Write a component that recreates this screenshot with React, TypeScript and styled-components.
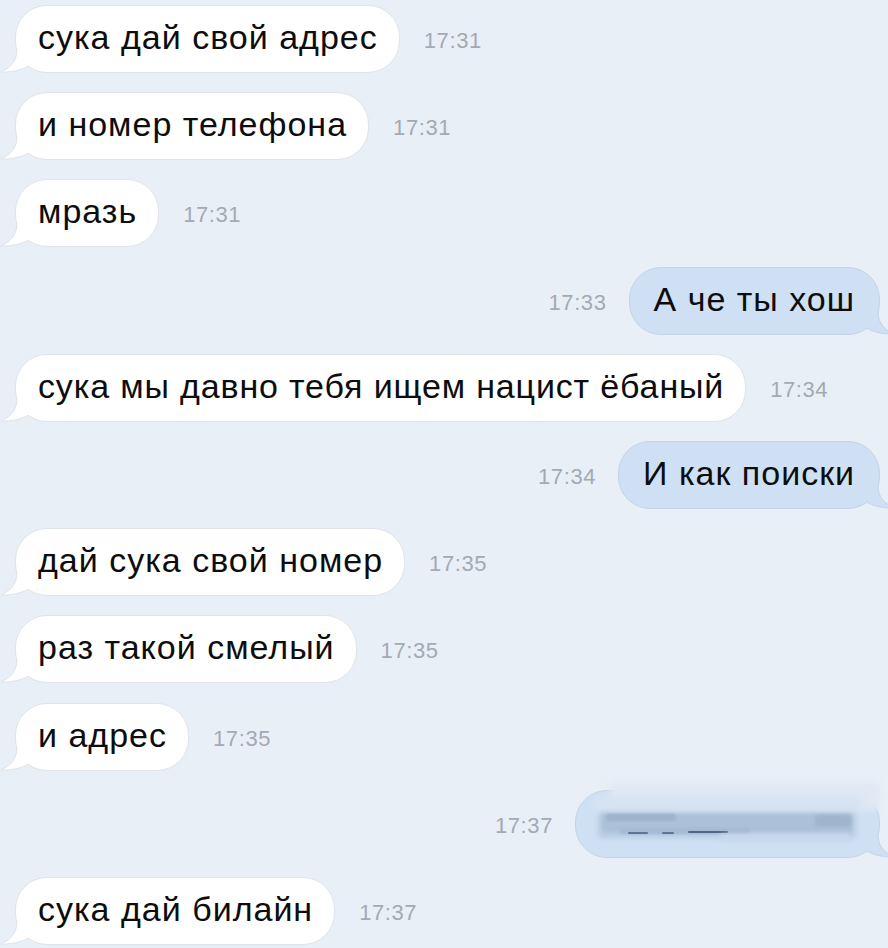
import React from "react";
import styled, { createGlobalStyle } from "styled-components";

const GlobalStyle = createGlobalStyle`
  html, body {
    margin: 0;
    padding: 0;
    background: #e9eff6;
  }
  body {
    font-family: "Liberation Sans", Arial, sans-serif;
  }
`;

const Chat = styled.div`
  display: flex;
  flex-direction: column;
  gap: 19.2px;
  padding: 5px 8px 0 15px;
  width: 888px;
  height: 948px;
  box-sizing: border-box;
  overflow: hidden;
  background: #e9eff6;
`;

const Row = styled.div<{ $out?: boolean }>`
  display: flex;
  align-items: center;
  justify-content: ${(p) => (p.$out ? "flex-end" : "flex-start")};
  gap: ${(p) => (p.$out ? "22px" : "24px")};
  height: 68px;
  flex-shrink: 0;
`;

const Bubble = styled.div<{ $out?: boolean; $spacing?: number }>`
  position: relative;
  height: 68px;
  box-sizing: border-box;
  display: flex;
  align-items: center;
  padding: 0 ${(p) => (p.$out ? "24px" : "21px")} 3px ${(p) => (p.$out ? "24px" : "22px")};
  border-radius: 32px;
  background: ${(p) => (p.$out ? "#cfe0f4" : "#ffffff")};
  border: 1px solid ${(p) => (p.$out ? "#c3d4e8" : "#dfe4ea")};
  color: #0d0d0d;
  font-size: 34px;
  letter-spacing: ${(p) => p.$spacing ?? 1}px;
  white-space: nowrap;
`;

const Time = styled.span`
  font-family: "Liberation Sans", Arial, sans-serif;
  font-size: 22px;
  letter-spacing: 0.6px;
  color: #a3aab3;
  padding-top: 4px;
`;

const TailSvg = styled.svg<{ $out?: boolean }>`
  position: absolute;
  bottom: -1px;
  width: 34px;
  height: 28px;
  ${(p) => (p.$out ? "right: -16px; transform: scaleX(-1);" : "left: -16px;")}
`;

const Smudge = styled.div`
  position: relative;
  width: 255px;
  height: 40px;
`;

const SmudgeBand = styled.div<{ $w: number; $h: number; $top: number; $left: number; $c: string; $blur: number }>`
  position: absolute;
  top: ${(p) => p.$top}px;
  left: ${(p) => p.$left}px;
  width: ${(p) => p.$w}px;
  height: ${(p) => p.$h}px;
  background: ${(p) => p.$c};
  filter: blur(${(p) => p.$blur}px);
  border-radius: 4px;
`;

const Tail: React.FC<{ out?: boolean }> = ({ out }) => {
  const fill = out ? "#cfe0f4" : "#ffffff";
  const stroke = out ? "#c3d4e8" : "#dfe4ea";
  return (
    <TailSvg $out={out} viewBox="0 0 34 28">
      <path d="M17 0 L17 4 C17 15 12 22 1 27 C10 27.5 20 25.5 29 21 L29 0 Z" fill={fill} />
      <path d="M17 4 C17 15 12 22 1 27 C10 27.5 20 25.5 29 21" fill="none" stroke={stroke} strokeWidth="1" />
    </TailSvg>
  );
};

type Msg = { text?: string; time: string; out?: boolean; hidden?: boolean; spacing?: number };

const messages: Msg[] = [
  { text: "сука дай свой адрес", time: "17:31" },
  { text: "и номер телефона", time: "17:31" },
  { text: "мразь", time: "17:31" },
  { text: "А че ты хош", time: "17:33", out: true },
  { text: "сука мы давно тебя ищем нацист ёбаный", time: "17:34", spacing: 0.85 },
  { text: "И как поиски", time: "17:34", out: true },
  { text: "дай сука свой номер", time: "17:35" },
  { text: "раз такой смелый", time: "17:35" },
  { text: "и адрес", time: "17:35" },
  { time: "17:37", out: true, hidden: true },
  { text: "сука дай билайн", time: "17:37" },
];

const bands = [
  { top: -20, left: 10, w: 270, h: 28, c: "#e0e9f4", blur: 3 },
  { top: -6, left: -6, w: 268, h: 18, c: "#d6e3f2", blur: 3 },
  { top: 10, left: -2, w: 258, h: 26, c: "#b8cbe2", blur: 2.5 },
  { top: 12, left: 2, w: 250, h: 18, c: "#acc0d9", blur: 1.5 },
  { top: 12, left: 6, w: 70, h: 7, c: "#9fb3cc", blur: 1.2 },
  { top: 13, left: 215, w: 36, h: 12, c: "#a0b4cd", blur: 1.5 },
  { top: 26, left: 20, w: 130, h: 6, c: "#a5bad4", blur: 1.2 },
  { top: 30, left: 28, w: 20, h: 2, c: "#5e7592", blur: 0.5 },
  { top: 30, left: 62, w: 12, h: 2, c: "#5e7592", blur: 0.5 },
  { top: 29, left: 88, w: 40, h: 2, c: "#4f6683", blur: 0.5 },
  { top: 32, left: 120, w: 130, h: 8, c: "#c8d8ec", blur: 2 },
];

export default function App() {
  return (
    <>
      <GlobalStyle />
      <Chat>
        {messages.map((m, i) => (
          <Row key={i} $out={m.out}>
            {m.out && <Time>{m.time}</Time>}
            <Bubble $out={m.out} $spacing={m.spacing}>
              {m.hidden ? (
                <Smudge>
                  {bands.map((b, j) => (
                    <SmudgeBand key={j} $top={b.top} $left={b.left} $w={b.w} $h={b.h} $c={b.c} $blur={b.blur} />
                  ))}
                </Smudge>
              ) : (
                m.text
              )}
              <Tail out={m.out} />
            </Bubble>
            {!m.out && <Time>{m.time}</Time>}
          </Row>
        ))}
      </Chat>
    </>
  );
}
